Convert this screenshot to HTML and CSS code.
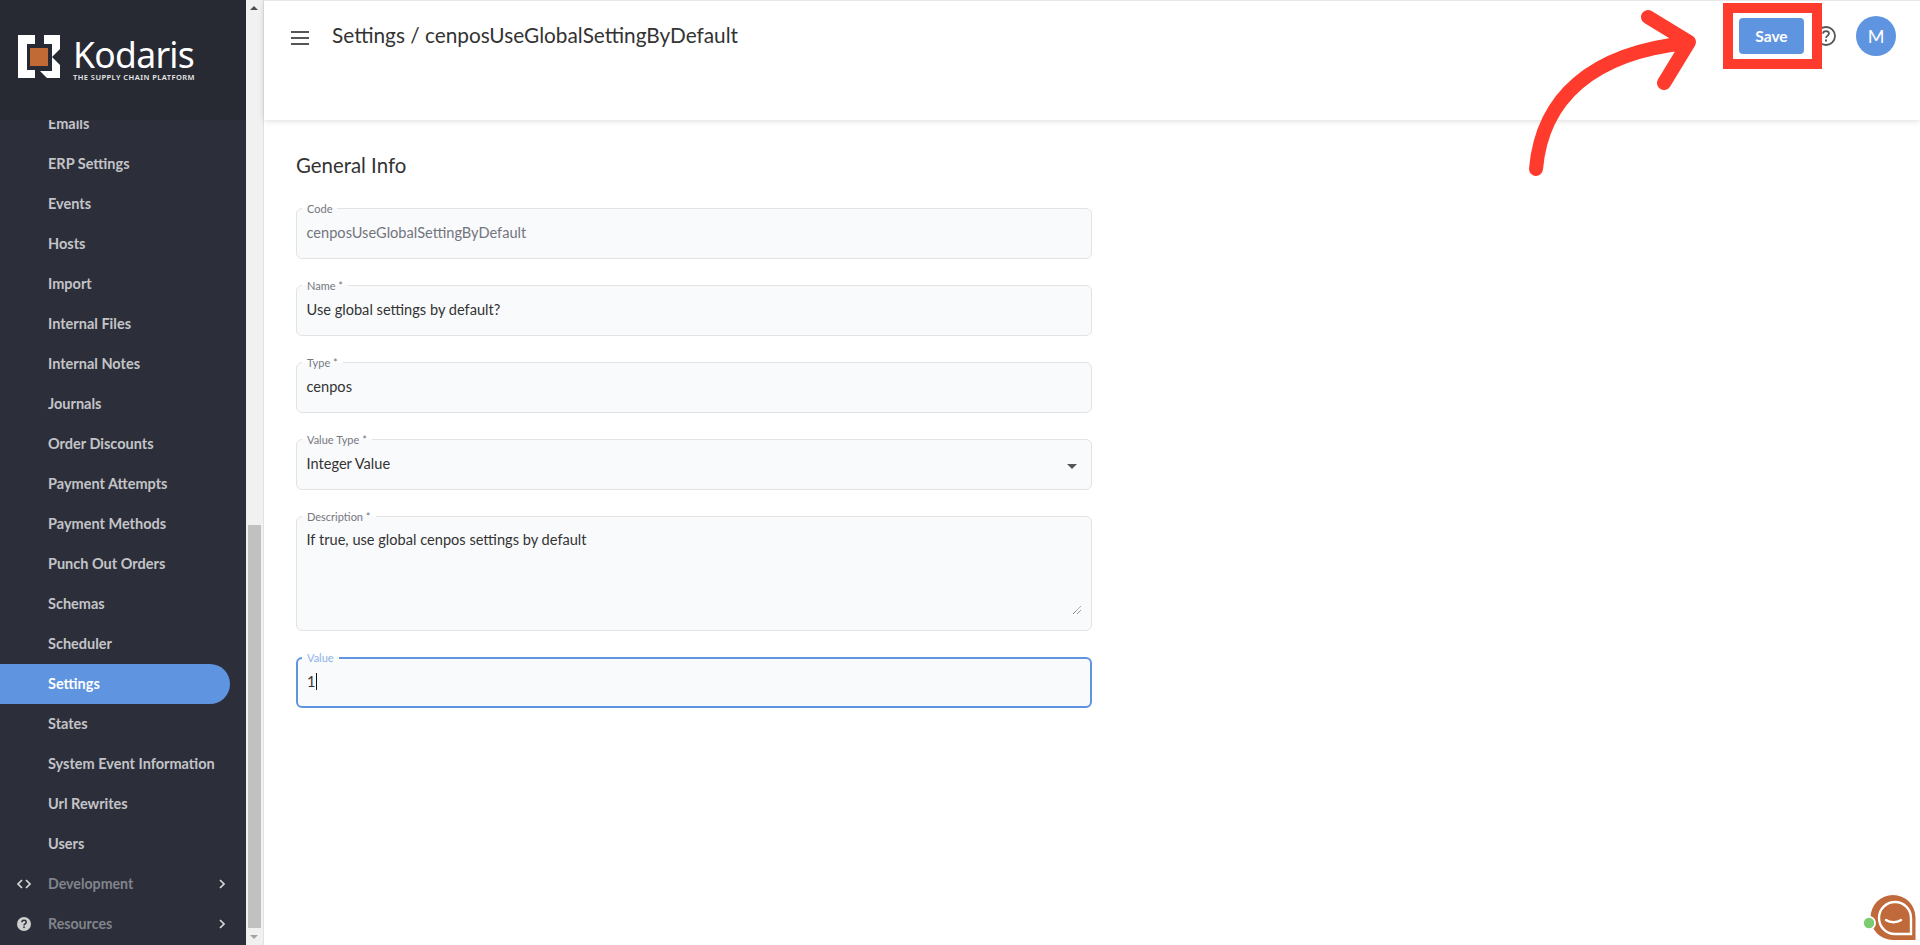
FILE: index.html
```html
<!DOCTYPE html>
<html lang="en">
<head>
<meta charset="utf-8">
<title>Settings</title>
<link rel="stylesheet" href="styles.css">
</head>
<body>
<div class="app">
  <aside class="sidebar">
    <div class="brand">
      <svg class="brand-mark" width="44" height="44" viewBox="18 35 44 44">
        <path fill="#fff" d="M18 35H35V44H27V70H35V78H18Z"/>
        <path fill="#fff" d="M44 35H60V49L52 57L60 65V78H47L40 71H52V44H44Z"/>
        <rect x="30" y="48" width="18" height="18" fill="#c26a36"/>
      </svg>
      <div class="brand-text">
        <div class="brand-name">Kodaris</div>
        <div class="brand-tag">THE SUPPLY CHAIN PLATFORM</div>
      </div>
    </div>
    <nav class="nav">
      <ul class="nav-list">
        <li class="nav-item">Emails</li>
        <li class="nav-item">ERP Settings</li>
        <li class="nav-item">Events</li>
        <li class="nav-item">Hosts</li>
        <li class="nav-item">Import</li>
        <li class="nav-item">Internal Files</li>
        <li class="nav-item">Internal Notes</li>
        <li class="nav-item">Journals</li>
        <li class="nav-item">Order Discounts</li>
        <li class="nav-item">Payment Attempts</li>
        <li class="nav-item">Payment Methods</li>
        <li class="nav-item">Punch Out Orders</li>
        <li class="nav-item">Schemas</li>
        <li class="nav-item">Scheduler</li>
        <li class="nav-item active">Settings</li>
        <li class="nav-item">States</li>
        <li class="nav-item">System Event Information</li>
        <li class="nav-item">Url Rewrites</li>
        <li class="nav-item">Users</li>
        <li class="nav-item group">
          <svg class="group-icon" width="16" height="16" viewBox="0 0 16 16"><path d="M6 4L2 8L6 12M10 4L14 8L10 12" fill="none" stroke="#d8d8d8" stroke-width="1.7"/></svg>
          <span class="group-label">Development</span>
          <svg class="chev" width="8" height="10" viewBox="0 0 8 10"><path d="M2 1L6 5L2 9" fill="none" stroke="#d8d8d8" stroke-width="1.7"/></svg>
        </li>
        <li class="nav-item group">
          <svg class="group-icon" width="16" height="16" viewBox="0 0 16 16"><circle cx="8" cy="8" r="7" fill="#cfcfcf"/><path d="M5.9 6.2C6 3.6 10.2 3.7 10.2 6.2C10.2 7.8 8 7.8 8 9.4" fill="none" stroke="#2c2f3a" stroke-width="1.5"/><rect x="7.2" y="10.5" width="1.6" height="1.6" fill="#2c2f3a"/></svg>
          <span class="group-label">Resources</span>
          <svg class="chev" width="8" height="10" viewBox="0 0 8 10"><path d="M2 1L6 5L2 9" fill="none" stroke="#d8d8d8" stroke-width="1.7"/></svg>
        </li>
      </ul>
    </nav>
  </aside>
  <div class="scrollbar">
    <div class="arrow-up"></div>
    <div class="scroll-space"></div>
    <div class="thumb"></div>
    <div class="arrow-down"></div>
  </div>
  <main class="main">
    <header class="topbar">
      <div class="hamburger"><span></span><span></span><span></span></div>
      <h1 class="title">Settings / cenposUseGlobalSettingByDefault</h1>
      <div class="actions">
        <button class="save">Save</button>
        <svg class="help" width="22" height="22" viewBox="0 0 22 22"><circle cx="11" cy="11" r="9" fill="none" stroke="#555" stroke-width="1.8"/><path d="M8 8.6C8.2 5.2 14 5.4 14 8.6C14 10.8 11 10.8 11 13" fill="none" stroke="#555" stroke-width="1.7"/><rect x="10" y="14.5" width="2" height="2" fill="#555"/></svg>
        <div class="avatar">M</div>
      </div>
    </header>
    <section class="content">
      <h2 class="section-title">General Info</h2>
      <div class="form">
        <div class="field"><label class="field-label">Code</label><div class="field-value muted">cenposUseGlobalSettingByDefault</div></div>
        <div class="field"><label class="field-label">Name *</label><div class="field-value">Use global settings by default?</div></div>
        <div class="field"><label class="field-label">Type *</label><div class="field-value">cenpos</div></div>
        <div class="field select"><label class="field-label">Value Type *</label><div class="field-value">Integer Value</div><span class="caret"></span></div>
        <div class="field area"><label class="field-label">Description *</label><div class="field-value">If true, use global cenpos settings by default</div>
          <svg class="resize" width="10" height="10" viewBox="0 0 10 10"><path d="M1 9L9 1M5 9L9 5" stroke="#666" stroke-width="1" stroke-dasharray="1 .6" fill="none"/></svg>
        </div>
        <div class="field focused"><label class="field-label">Value</label><div class="field-value">1<span class="cursor"></span></div></div>
      </div>
    </section>
  </main>
</div>

<div class="callout-box"></div>
<svg class="callout-arrow" width="190" height="190" viewBox="0 0 190 190">
  <path d="M6 166C12 95 62 50 156 40M118 14L159 39L134 80" fill="none" stroke="#ff3b2d" stroke-width="14" stroke-linecap="round" stroke-linejoin="round"/>
</svg>

<svg class="chat" width="56" height="50" viewBox="1862 893 56 50">
  <path fill="#c0693a" d="M1893 895A22.5 22.5 0 0 1 1915.5 917.5V940H1893A22.5 22.5 0 0 1 1893 895Z"/>
  <path fill="none" stroke="#fff" stroke-width="2.4" d="M1895 902A16 16 0 0 1 1911 918V934H1895A16 16 0 0 1 1895 902Z"/>
  <path fill="none" stroke="#fff" stroke-width="2.4" stroke-linecap="round" d="M1886 920C1890 923 1897 923 1901 920"/>
  <circle cx="1869" cy="923" r="7" fill="#fff"/>
  <circle cx="1869" cy="923" r="5.2" fill="#7ccb6e"/>
</svg>
</body>
</html>
```
FILE: styles.css
```css
* { box-sizing: border-box; }
html, body { margin: 0; height: 100%; overflow: hidden; background: #fff; }
body { font-family: "Lato", "Noto Sans", sans-serif; color: #333; }
.app { display: flex; height: 945px; }

.sidebar { width: 246px; flex: none; background: #2c2f3a; display: flex; flex-direction: column; overflow: hidden; }
.brand { height: 120px; flex: none; background: #272a33; display: flex; align-items: flex-start; padding: 35px 0 0 18px; gap: 11px; position: relative; z-index: 1; }
.brand-mark { flex: none; }
.brand-text { margin-top: 0; }
.brand-name { font-family: "Noto Sans", sans-serif; color: #fff; font-size: 35.5px; line-height: 38px; letter-spacing: -0.7px; }
.brand-tag { font-family: "Noto Sans", sans-serif; color: #e8e8e8; font-size: 7.5px; line-height: 9px; font-weight: 600; letter-spacing: 0.45px; white-space: nowrap; margin-top: 0; }
.nav { flex: 1; overflow: hidden; }
.nav-list { list-style: none; margin: -16px 0 0; padding: 0; }
.nav-item { height: 40px; line-height: 40px; padding-left: 48px; font-size: 14.5px; font-weight: 700; color: #c4c4c8; white-space: nowrap; width: 230px; }
.nav-item.active { background: #5f94e0; color: #fff; border-radius: 0 20px 20px 0; }
.nav-item.group { display: flex; align-items: center; padding-left: 16px; color: #82848c; width: 246px; position: relative; font-size: 14.2px; }
.group-icon { flex: none; }
.group-label { margin-left: 16px; flex: 1; }
.chev { margin-right: 20px; flex: none; }

.scrollbar { width: 18px; flex: none; background: #f1f1f1; border-right: 1px solid #e2e2e2; display: flex; flex-direction: column; align-items: center; }
.arrow-up { width: 0; height: 0; margin: 6px 0 0 -1px; border-left: 4px solid transparent; border-right: 4px solid transparent; border-bottom: 4px solid #505050; }
.scroll-space { height: 515px; flex: none; }
.thumb { width: 13px; margin-left: -1px; height: 403px; background: #c1c1c1; flex: none; }
.arrow-down { width: 0; height: 0; margin: 7px 0 0 -1px; border-left: 4px solid transparent; border-right: 4px solid transparent; border-top: 4px solid #a3a3a3; }

.main { flex: 1; min-width: 0; }
.topbar { height: 120px; border-top: 1px solid #e8e8e8; display: flex; align-items: flex-start; padding: 0 24px 0 27px; box-shadow: 0 1px 6px rgba(0,0,0,.14); position: relative; }
.hamburger { width: 18px; margin-top: 30px; display: flex; flex-direction: column; gap: 4px; }
.hamburger span { height: 2px; background: #555; display: block; }
.title { font-size: 20.8px; font-weight: 400; margin: 22px 0 0 23px; line-height: 24px; color: #333; }
.actions { margin-left: auto; display: flex; align-items: center; margin-top: 15px; }
.save { width: 65px; height: 36px; border: 0; border-radius: 4px; background: #5f94e0; color: #fff; font: 700 15.5px "Lato", sans-serif; }
.help { margin-left: 11px; }
.avatar { width: 40px; height: 40px; border-radius: 50%; background: #5f94e0; color: #fff; font-size: 18px; display: flex; align-items: center; justify-content: center; margin-left: 19px; }

.content { padding: 33px 0 0 32px; }
.section-title { font-size: 20.4px; font-weight: 400; line-height: 24px; margin: 0 0 31px; color: #333; }
.form { width: 796px; display: flex; flex-direction: column; gap: 26px; }
.field { position: relative; height: 51px; background: #f9fafc; border: 1.5px solid #e3e3e3; border-radius: 6px; padding: 13px 9.5px 0; }
.field-label { position: absolute; top: -7px; left: 5px; padding: 0 5px; font-size: 11px; line-height: 13px; color: #77777f; background: linear-gradient(#fff 50%, #f9fafc 50%); }
.field-value { font-size: 14.6px; line-height: 22px; color: #333; }
.field-value.muted { color: #73757c; }
.field.area { height: 115px; padding-top: 12px; }
.field.focused { height: 51px; border: 2px solid #5f94e0; padding: 12px 9px 0; }
.field.focused .field-label { color: #8fb3e8; top: -8px; left: 4px; }
.cursor { display: inline-block; width: 1px; height: 17px; background: #111; vertical-align: -3px; margin-left: 1px; }
.caret { position: absolute; right: 14px; top: 24px; width: 0; height: 0; border-left: 5px solid transparent; border-right: 5px solid transparent; border-top: 5px solid #555; }
.resize { position: absolute; right: 9px; bottom: 15px; }

.callout-box { position: absolute; left: 1723px; top: 3px; width: 99px; height: 66px; border: 10px solid #ff3b2d; }
.callout-arrow { position: absolute; left: 1530px; top: 3px; overflow: visible; }
.chat { position: absolute; left: 1862px; top: 893px; }
```
